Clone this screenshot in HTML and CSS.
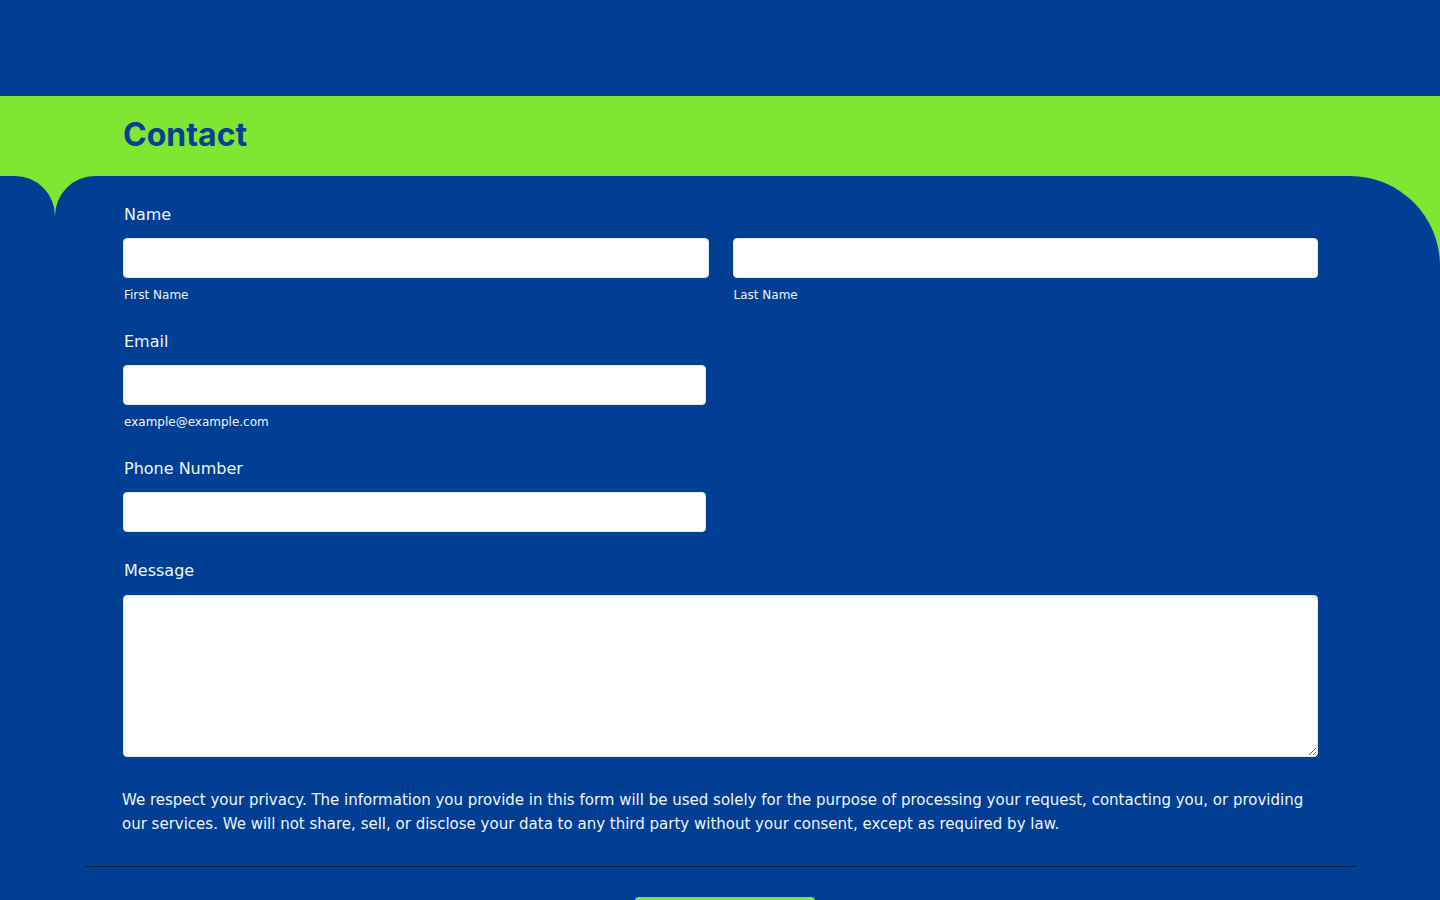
FILE: index.html
```html
<!DOCTYPE html>
<html lang="en">
<head>
<meta charset="utf-8">
<title>Contact</title>
<link rel="stylesheet" href="styles.css">
</head>
<body>
<header class="topbar"></header>
<section class="hero">
  <h1 class="hero-title">Contact</h1>
</section>
<div class="panel-wrap">
  <div class="notch"></div>
  <main class="panel">
    <form class="form">
      <div class="field">
        <label class="label">Name</label>
        <div class="row">
          <div class="col">
            <input class="input" type="text">
            <span class="sublabel">First Name</span>
          </div>
          <div class="col">
            <input class="input" type="text">
            <span class="sublabel">Last Name</span>
          </div>
        </div>
      </div>
      <div class="field">
        <label class="label">Email</label>
        <div class="half">
          <input class="input" type="email">
          <span class="sublabel">example@example.com</span>
        </div>
      </div>
      <div class="field">
        <label class="label">Phone Number</label>
        <div class="half">
          <input class="input" type="tel">
        </div>
      </div>
      <div class="field field-msg">
        <label class="label">Message</label>
        <textarea class="textarea"></textarea>
      </div>
      <p class="privacy">We respect your privacy. The information you provide in this form will be used solely for the purpose of processing your request, contacting you, or providing our services. We will not share, sell, or disclose your data to any third party without your consent, except as required by law.</p>
      <hr class="divider">
      <div class="actions">
        <button type="button" class="submit">Submit</button>
      </div>
    </form>
  </main>
</div>
</body>
</html>
```
FILE: styles.css
```css
* { box-sizing: border-box; }
html, body {
  margin: 0;
  padding: 0;
  background: #003f94;
  font-family: "DejaVu Sans", sans-serif;
  overflow: hidden;
  height: 900px;
}
.topbar {
  height: 96px;
  background: #003f94;
}
.hero {
  height: 80px;
  background: #80e632;
  padding-left: 123px;
  display: flex;
  align-items: center;
}
.hero-title {
  margin: 0;
  font-family: "Inter", sans-serif;
  font-weight: 700;
  font-size: 32px;
  line-height: 40px;
  color: #0a3f96;
  padding-bottom: 2px;
}
.panel-wrap {
  display: flex;
  background: #80e632;
}
.notch {
  width: 55px;
  background: #003f94;
  border-top-right-radius: 40px;
  flex: none;
}
.panel {
  flex: 1;
  background: #003f94;
  border-top-left-radius: 40px;
  border-top-right-radius: 90px;
  padding: 29px 122px 0 68px;
  min-height: 724px;
}
.form {
  display: flex;
  flex-direction: column;
}
.field {
  display: flex;
  flex-direction: column;
  margin-bottom: 29px;
}
.label {
  font-size: 16px;
  line-height: 20px;
  color: #eef3fc;
  padding-left: 1px;
  margin-bottom: 13px;
}
.row {
  display: flex;
  gap: 24px;
}
.col {
  flex: 1;
  display: flex;
  flex-direction: column;
}
.half {
  width: 583px;
  display: flex;
  flex-direction: column;
}
.input {
  height: 40px;
  border: 1px solid #e4e9f2;
  border-radius: 4px;
  background: #fff;
  font-family: inherit;
  font-size: 16px;
  padding: 0 10px;
}
.sublabel {
  font-size: 12px;
  line-height: 16px;
  color: #eef3fc;
  margin-top: 9px;
  padding-left: 1px;
}
.field-msg {
  margin-bottom: 31px;
}
.field-msg .label {
  margin-bottom: 14px;
}
.textarea {
  height: 162px;
  border: 1px solid #e4e9f2;
  border-radius: 4px;
  background: #fff;
  font-family: inherit;
  font-size: 16px;
  padding: 10px;
  resize: vertical;
}
.privacy {
  margin: 0 0 0 -1px;
  font-size: 15px;
  line-height: 24px;
  color: #eef3fc;
}
.divider {
  margin: 30px -38px 30px;
  border: 0;
  height: 1px;
  background: #0a1f42;
}
.actions {
  display: flex;
  padding-left: 512px;
}
.submit {
  width: 180px;
  height: 44px;
  border: 0;
  border-radius: 4px;
  background: #80e632;
  color: #003f94;
  font-family: inherit;
  font-size: 16px;
  font-weight: 700;
}
```
